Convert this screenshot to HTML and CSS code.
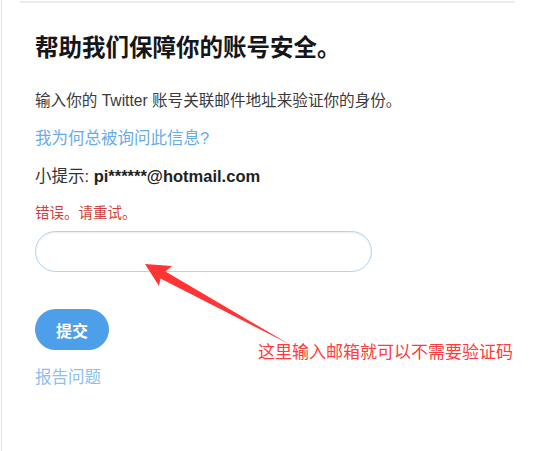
FILE: index.html
```html
<!DOCTYPE html>
<html lang="zh-CN">
<head>
  <meta charset="UTF-8">
  <meta name="viewport" content="width=device-width, initial-scale=1.0">
  <title>帮助我们保障你的账号安全</title>
  <link rel="stylesheet" href="styles.css">
</head>
<body>
  <div class="page">
    <!-- Línea superior -->
    <div class="top-rule"></div>

    <div class="content">
      <h1 class="title">帮助我们保障你的账号安全。</h1>
      <p class="lead">输入你的 Twitter 账号关联邮件地址来验证你的身份。</p>
      <a class="link why" href="#">我为何总被询问此信息?</a>
      <p class="hint">小提示: <strong>pi******@hotmail.com</strong></p>
      <p class="error">错误。请重试。</p>

      <input class="field" type="text">

      <button class="submit" type="button">提交</button>
      <a class="link report" href="#">报告问题</a>
    </div>

    <!-- Anotación -->
    <svg class="arrow" width="554" height="451" viewBox="0 0 554 451">
      <polygon points="145,264 172,266 165.5,271.5 289,344 160.5,278.5 159,286" fill="#ff3434"/>
    </svg>
    <div class="note">这里输入邮箱就可以不需要验证码</div>
  </div>
</body>
</html>
```

FILE: styles.css
```css
body {
  margin: 0;
  background: #fff;
  font-family: "Liberation Sans", "Noto Sans CJK SC", sans-serif;
  color: #333;
}

.page {
  position: relative;
  margin-left: 1px;
  min-height: 451px;
  border-left: 1px solid #dfe2e8;
  overflow: hidden;
}

/* Línea superior */
.top-rule {
  margin: 1px 39px 0 18px;
  border-top: 2px solid #e9edf1;
}

.content {
  display: flex;
  flex-direction: column;
  align-items: flex-start;
  padding-left: 33px;
}

.title {
  margin: 30px 0 0;
  font-size: 23.5px;
  line-height: 30px;
  font-weight: bold;
  color: #141619;
}

.lead {
  margin: 27px 0 0;
  font-size: 15.6px;
  line-height: 22px;
  color: #3a3a3a;
}

.link {
  color: #67acea;
  text-decoration: none;
  font-size: 16.5px;
  line-height: 22px;
}

.why {
  margin-top: 15px;
}

.hint {
  margin: 16px 0 0;
  font-size: 16.5px;
  line-height: 22px;
  color: #333;
}

.hint strong {
  color: #222;
}

.error {
  margin: 16px 0 0;
  font-size: 14.5px;
  line-height: 20px;
  color: #cf3f3b;
}

.field {
  box-sizing: border-box;
  margin-top: 8px;
  width: 337px;
  height: 41px;
  border: 1px solid #b3d2f0;
  border-radius: 21px;
  box-shadow: inset 0 1px 2px rgba(0, 0, 0, 0.08);
  outline: none;
  background: #fff;
}

.submit {
  margin-top: 37px;
  width: 74px;
  height: 41px;
  border: none;
  border-radius: 21px;
  background: #4d9fe9;
  color: #fff;
  font-family: "Noto Sans CJK SC", sans-serif;
  font-size: 16px;
  font-weight: bold;
  cursor: pointer;
}

.report {
  margin-top: 16px;
  color: #8fc0ec;
}

/* Anotación en rojo */
.arrow {
  position: absolute;
  top: 0;
  left: -2px;
}

.note {
  position: absolute;
  top: 340px;
  left: 256px;
  font-family: "Noto Sans CJK SC", sans-serif;
  font-size: 17px;
  line-height: 22px;
  color: #ff3b3b;
  white-space: nowrap;
}
```
